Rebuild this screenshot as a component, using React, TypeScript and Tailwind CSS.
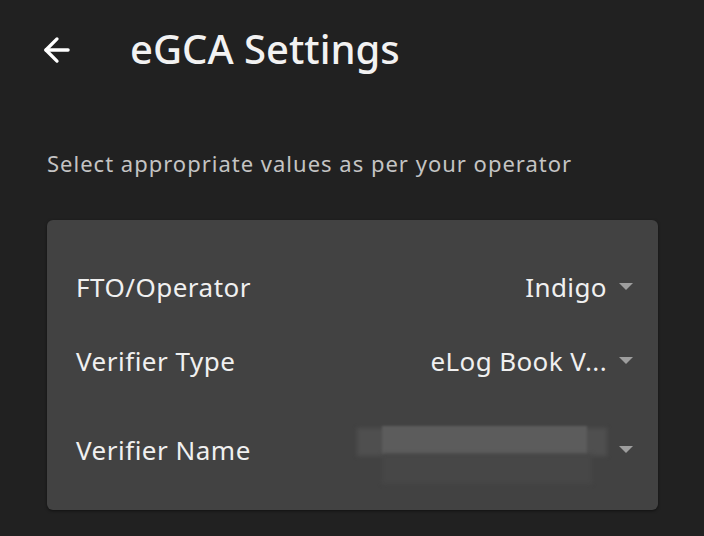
import { ArrowLeft } from "lucide-react";

const rows = [
  { label: "FTO/Operator", value: "Indigo" },
  { label: "Verifier Type", value: "eLog Book V..." },
  { label: "Verifier Name", value: null },
];

function Caret() {
  return (
    <svg width="14" height="8" viewBox="0 0 14 8" className="shrink-0">
      <path d="M0 0 L14 0 L7 7 Z" fill="#9e9e9e" />
    </svg>
  );
}

export default function App() {
  return (
    <div
      className="w-[704px] h-[536px] bg-[#212121] text-white overflow-hidden"
      style={{ fontFamily: '"Noto Sans", sans-serif' }}
    >
      <header className="flex items-center h-[100px] pl-[38px]">
        <ArrowLeft size={38} strokeWidth={2.1} className="text-white" />
        <h1 className="ml-[54px] text-[40px] font-medium tracking-[0px] text-[#f2f2f2] leading-none pb-[2px]">
          eGCA Settings
        </h1>
      </header>

      <p className="mt-[48px] ml-[47px] text-[22px] leading-[30px] text-[#c4c4c4] tracking-[1px]">
        Select appropriate values as per your operator
      </p>

      <div className="mt-[42px] ml-[47px] w-[611px] h-[290px] rounded-[6px] bg-[#424242] shadow-[0_1px_3px_rgba(0,0,0,0.5)] pt-[42px] px-[25px] flex flex-col">
        {rows.map((row) => (
          <div key={row.label} className="flex items-center justify-between h-[80px] first:h-[50px] [&:nth-child(2)]:h-[98px]">
            <span className="pl-[4px] text-[26px] tracking-[0.5px] text-[#f0f0f0]">{row.label}</span>
            <div className="flex items-center gap-[12px]">
              {row.value ? (
                <span className="text-[26px] tracking-[0.4px] text-[#f0f0f0]">{row.value}</span>
              ) : (
                <div className="relative w-[250px] h-[60px] mt-[20px]">
                  <div className="absolute left-[0px] top-[-2px] w-[250px] h-[28px] bg-[#4f4f4f] blur-[2px]" />
                  <div className="absolute left-[25px] top-[-4px] w-[205px] h-[28px] bg-[#5c5c5c] blur-[1px]" />
                  <div className="absolute left-[25px] top-[24px] w-[210px] h-[30px] bg-[#474747] blur-[2px]" />
                </div>
              )}
              <Caret />
            </div>
          </div>
        ))}
      </div>
    </div>
  );
}
